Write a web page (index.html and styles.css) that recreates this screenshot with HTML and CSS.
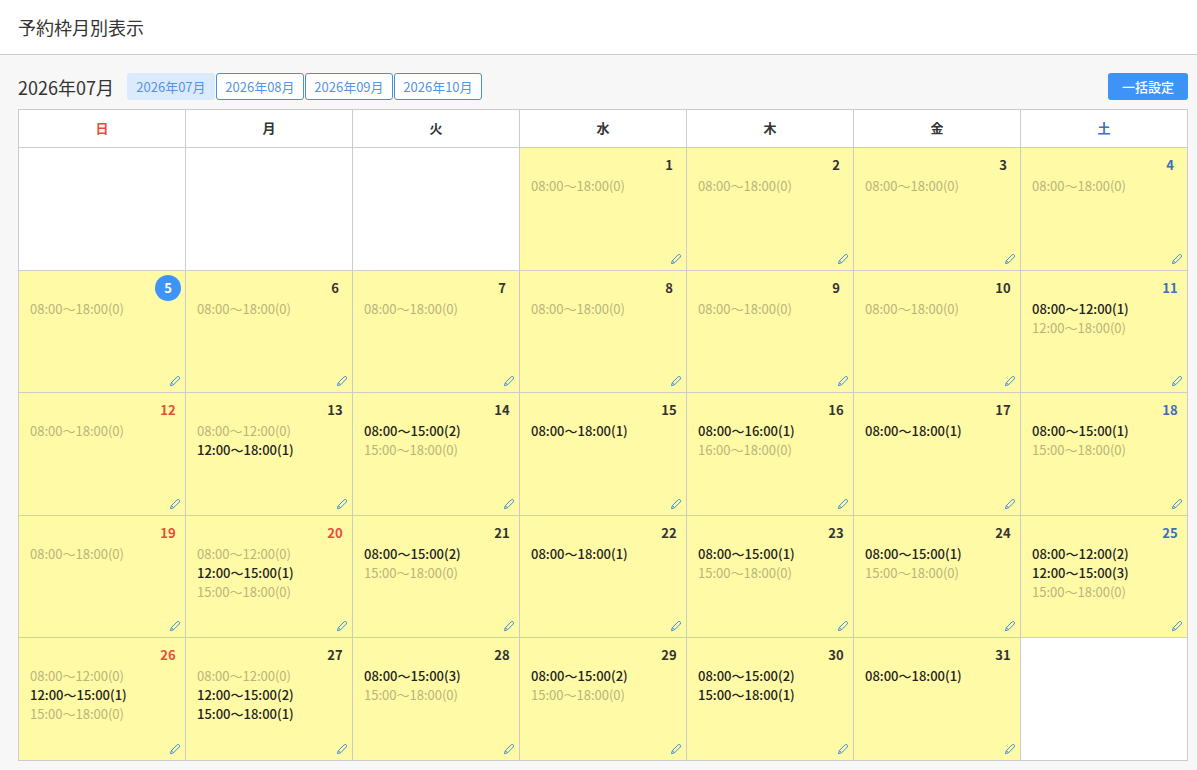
FILE: index.html
```
<!DOCTYPE html>
<html lang="ja">
<head>
<meta charset="utf-8">
<title>予約枠月別表示</title>
<link rel="stylesheet" href="styles.css">
</head>
<body>
<svg class="sprite" aria-hidden="true"><symbol id="pencil" viewBox="0 0 12 12"><path d="M1.5 10.7 2.2 7.8 7.9 2Q8.8 1.2 9.9 1.6Q11.1 2.4 10.3 4L4.5 9.8ZM2.2 7.8Q3.8 8.2 4.5 9.8"/></symbol></svg>
<header class="page-header"><h1 class="page-title">予約枠月別表示</h1></header>
<main class="content">
<div class="toolbar">
<h2 class="month-title">2026年07月</h2>
<nav class="months">
<a class="month current" href="#" aria-current="page">2026年07月</a>
<a class="month" href="#">2026年08月</a>
<a class="month" href="#">2026年09月</a>
<a class="month" href="#">2026年10月</a>
</nav>
<button class="bulk" type="button">一括設定</button>
</div>
<table class="calendar">
<thead><tr><th class="holiday">日</th><th>月</th><th>火</th><th>水</th><th>木</th><th>金</th><th class="saturday">土</th></tr></thead>
<tbody>
<tr>
<td></td><td></td><td></td>
<td class="open"><div class="date">1</div><ul class="slots"><li>08:00〜18:00(0)</li></ul><button class="edit" type="button" aria-label="編集"><svg class="icon"><use href="#pencil"/></svg></button></td>
<td class="open"><div class="date">2</div><ul class="slots"><li>08:00〜18:00(0)</li></ul><button class="edit" type="button" aria-label="編集"><svg class="icon"><use href="#pencil"/></svg></button></td>
<td class="open"><div class="date">3</div><ul class="slots"><li>08:00〜18:00(0)</li></ul><button class="edit" type="button" aria-label="編集"><svg class="icon"><use href="#pencil"/></svg></button></td>
<td class="open"><div class="date saturday">4</div><ul class="slots"><li>08:00〜18:00(0)</li></ul><button class="edit" type="button" aria-label="編集"><svg class="icon"><use href="#pencil"/></svg></button></td>
</tr>
<tr>
<td class="open"><div class="date today">5</div><ul class="slots"><li>08:00〜18:00(0)</li></ul><button class="edit" type="button" aria-label="編集"><svg class="icon"><use href="#pencil"/></svg></button></td>
<td class="open"><div class="date">6</div><ul class="slots"><li>08:00〜18:00(0)</li></ul><button class="edit" type="button" aria-label="編集"><svg class="icon"><use href="#pencil"/></svg></button></td>
<td class="open"><div class="date">7</div><ul class="slots"><li>08:00〜18:00(0)</li></ul><button class="edit" type="button" aria-label="編集"><svg class="icon"><use href="#pencil"/></svg></button></td>
<td class="open"><div class="date">8</div><ul class="slots"><li>08:00〜18:00(0)</li></ul><button class="edit" type="button" aria-label="編集"><svg class="icon"><use href="#pencil"/></svg></button></td>
<td class="open"><div class="date">9</div><ul class="slots"><li>08:00〜18:00(0)</li></ul><button class="edit" type="button" aria-label="編集"><svg class="icon"><use href="#pencil"/></svg></button></td>
<td class="open"><div class="date">10</div><ul class="slots"><li>08:00〜18:00(0)</li></ul><button class="edit" type="button" aria-label="編集"><svg class="icon"><use href="#pencil"/></svg></button></td>
<td class="open"><div class="date saturday">11</div><ul class="slots"><li class="booked">08:00〜12:00(1)</li><li>12:00〜18:00(0)</li></ul><button class="edit" type="button" aria-label="編集"><svg class="icon"><use href="#pencil"/></svg></button></td>
</tr>
<tr>
<td class="open"><div class="date holiday">12</div><ul class="slots"><li>08:00〜18:00(0)</li></ul><button class="edit" type="button" aria-label="編集"><svg class="icon"><use href="#pencil"/></svg></button></td>
<td class="open"><div class="date">13</div><ul class="slots"><li>08:00〜12:00(0)</li><li class="booked">12:00〜18:00(1)</li></ul><button class="edit" type="button" aria-label="編集"><svg class="icon"><use href="#pencil"/></svg></button></td>
<td class="open"><div class="date">14</div><ul class="slots"><li class="booked">08:00〜15:00(2)</li><li>15:00〜18:00(0)</li></ul><button class="edit" type="button" aria-label="編集"><svg class="icon"><use href="#pencil"/></svg></button></td>
<td class="open"><div class="date">15</div><ul class="slots"><li class="booked">08:00〜18:00(1)</li></ul><button class="edit" type="button" aria-label="編集"><svg class="icon"><use href="#pencil"/></svg></button></td>
<td class="open"><div class="date">16</div><ul class="slots"><li class="booked">08:00〜16:00(1)</li><li>16:00〜18:00(0)</li></ul><button class="edit" type="button" aria-label="編集"><svg class="icon"><use href="#pencil"/></svg></button></td>
<td class="open"><div class="date">17</div><ul class="slots"><li class="booked">08:00〜18:00(1)</li></ul><button class="edit" type="button" aria-label="編集"><svg class="icon"><use href="#pencil"/></svg></button></td>
<td class="open"><div class="date saturday">18</div><ul class="slots"><li class="booked">08:00〜15:00(1)</li><li>15:00〜18:00(0)</li></ul><button class="edit" type="button" aria-label="編集"><svg class="icon"><use href="#pencil"/></svg></button></td>
</tr>
<tr>
<td class="open"><div class="date holiday">19</div><ul class="slots"><li>08:00〜18:00(0)</li></ul><button class="edit" type="button" aria-label="編集"><svg class="icon"><use href="#pencil"/></svg></button></td>
<td class="open"><div class="date holiday">20</div><ul class="slots"><li>08:00〜12:00(0)</li><li class="booked">12:00〜15:00(1)</li><li>15:00〜18:00(0)</li></ul><button class="edit" type="button" aria-label="編集"><svg class="icon"><use href="#pencil"/></svg></button></td>
<td class="open"><div class="date">21</div><ul class="slots"><li class="booked">08:00〜15:00(2)</li><li>15:00〜18:00(0)</li></ul><button class="edit" type="button" aria-label="編集"><svg class="icon"><use href="#pencil"/></svg></button></td>
<td class="open"><div class="date">22</div><ul class="slots"><li class="booked">08:00〜18:00(1)</li></ul><button class="edit" type="button" aria-label="編集"><svg class="icon"><use href="#pencil"/></svg></button></td>
<td class="open"><div class="date">23</div><ul class="slots"><li class="booked">08:00〜15:00(1)</li><li>15:00〜18:00(0)</li></ul><button class="edit" type="button" aria-label="編集"><svg class="icon"><use href="#pencil"/></svg></button></td>
<td class="open"><div class="date">24</div><ul class="slots"><li class="booked">08:00〜15:00(1)</li><li>15:00〜18:00(0)</li></ul><button class="edit" type="button" aria-label="編集"><svg class="icon"><use href="#pencil"/></svg></button></td>
<td class="open"><div class="date saturday">25</div><ul class="slots"><li class="booked">08:00〜12:00(2)</li><li class="booked">12:00〜15:00(3)</li><li>15:00〜18:00(0)</li></ul><button class="edit" type="button" aria-label="編集"><svg class="icon"><use href="#pencil"/></svg></button></td>
</tr>
<tr>
<td class="open"><div class="date holiday">26</div><ul class="slots"><li>08:00〜12:00(0)</li><li class="booked">12:00〜15:00(1)</li><li>15:00〜18:00(0)</li></ul><button class="edit" type="button" aria-label="編集"><svg class="icon"><use href="#pencil"/></svg></button></td>
<td class="open"><div class="date">27</div><ul class="slots"><li>08:00〜12:00(0)</li><li class="booked">12:00〜15:00(2)</li><li class="booked">15:00〜18:00(1)</li></ul><button class="edit" type="button" aria-label="編集"><svg class="icon"><use href="#pencil"/></svg></button></td>
<td class="open"><div class="date">28</div><ul class="slots"><li class="booked">08:00〜15:00(3)</li><li>15:00〜18:00(0)</li></ul><button class="edit" type="button" aria-label="編集"><svg class="icon"><use href="#pencil"/></svg></button></td>
<td class="open"><div class="date">29</div><ul class="slots"><li class="booked">08:00〜15:00(2)</li><li>15:00〜18:00(0)</li></ul><button class="edit" type="button" aria-label="編集"><svg class="icon"><use href="#pencil"/></svg></button></td>
<td class="open"><div class="date">30</div><ul class="slots"><li class="booked">08:00〜15:00(2)</li><li class="booked">15:00〜18:00(1)</li></ul><button class="edit" type="button" aria-label="編集"><svg class="icon"><use href="#pencil"/></svg></button></td>
<td class="open"><div class="date">31</div><ul class="slots"><li class="booked">08:00〜18:00(1)</li></ul><button class="edit" type="button" aria-label="編集"><svg class="icon"><use href="#pencil"/></svg></button></td>
<td></td>
</tr>
</tbody>
</table>
</main>
</body>
</html>
```

FILE: styles.css
```
* { box-sizing: border-box; }
body {
  margin: 0;
  background: #f7f7f7;
  color: #333;
  font: 13px/19px "Noto Sans CJK JP", sans-serif;
}
.sprite { position: absolute; width: 0; height: 0; }
.page-header {
  padding: 14px 18px;
  background: #fff;
  border-bottom: 1px solid #ccc;
}
.page-title, .month-title {
  margin: 0;
  font-size: 18px;
  font-weight: 400;
  line-height: 26px;
}
.content { padding: 18px 9px 9px 18px; }
.toolbar {
  display: flex;
  align-items: center;
  margin-bottom: 9px;
}
.months { display: flex; gap: 1px; margin-left: 13px; }
.month {
  min-width: 88px;
  height: 27px;
  padding: 0 8px;
  border: 1px solid #4a90d9;
  border-radius: 3px;
  background: #fff;
  color: #5294e6;
  line-height: 26px;
  text-align: center;
  text-decoration: none;
}
.month.current { background: #dbeafe; border-color: #dbeafe; }
.bulk {
  height: 27px;
  margin-left: auto;
  padding: 0 14px;
  border: 0;
  border-radius: 3px;
  background: #3e93f6;
  color: #fff;
  font: inherit;
  font-weight: 500;
}
.calendar {
  width: 100%;
  height: calc(100vh - 118px);
  table-layout: fixed;
  border-collapse: collapse;
  background: #fff;
}
.calendar th, .calendar td { border: 1px solid #ccc; }
.calendar th { height: 38px; padding: 0 0 2px; font-weight: 700; }
.calendar td {
  position: relative;
  height: 122px;
  padding: 4px 4px 4px 11px;
  vertical-align: top;
}
.calendar .open { background: #fffaa5; }
.holiday { color: #e84c3d; }
.saturday { color: #3a6fc0; }
.date {
  width: 26px;
  height: 26px;
  margin: 0 0 -2px auto;
  border-radius: 50%;
  font-weight: 700;
  line-height: 26px;
  text-align: center;
}
.today { background: #3e93f6; color: #fff; }
.slots { margin: 0; padding: 0; list-style: none; color: #b8b47c; }
.booked { color: #222; font-weight: 500; }
.edit {
  position: absolute;
  right: 4px;
  bottom: 5px;
  display: flex;
  padding: 0;
  border: 0;
  background: none;
}
.icon {
  width: 12px;
  height: 12px;
  fill: none;
  stroke: #3e8fe0;
  stroke-width: 1;
  stroke-linejoin: round;
}
```
